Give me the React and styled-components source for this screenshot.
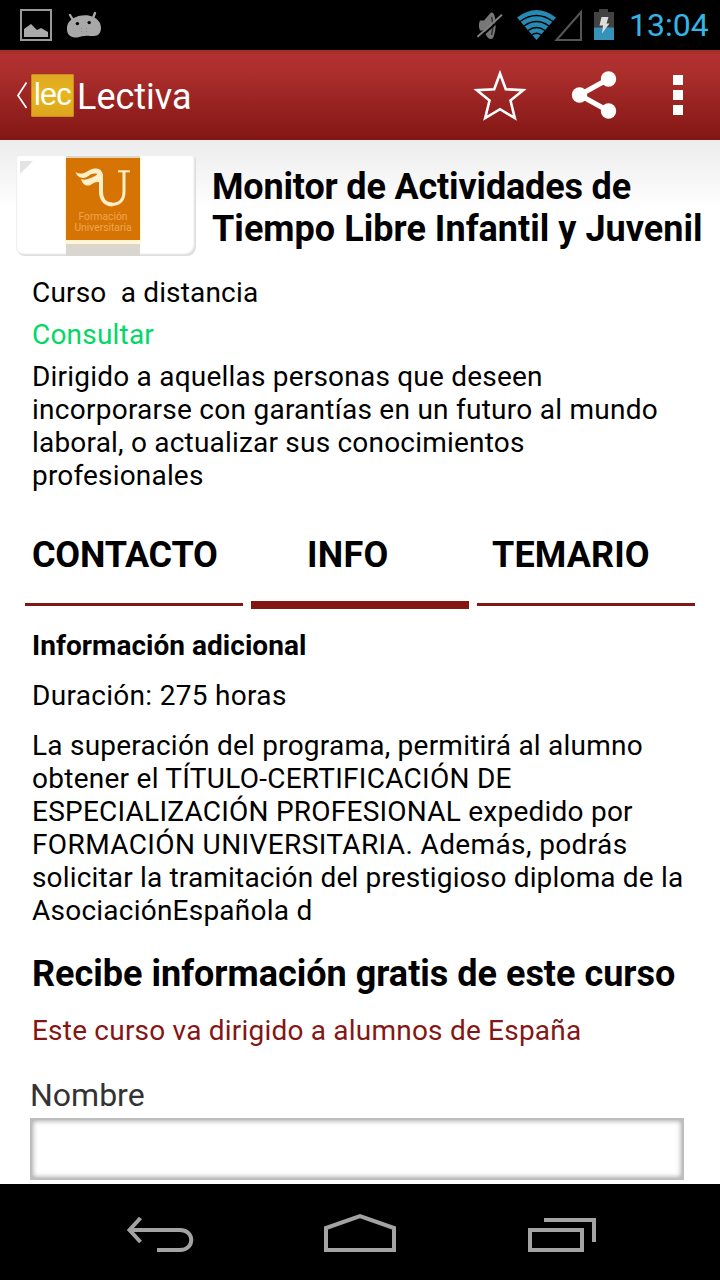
import React from 'react'
import styled, { createGlobalStyle } from 'styled-components'

const GlobalStyle = createGlobalStyle`
  body {
    margin: 0;
    background: #fff;
  }
`

const Screen = styled.div`
  display: flex;
  flex-direction: column;
  width: 720px;
  height: 1280px;
  overflow: hidden;
  background: #fff;
  color: #000;
  font-family: Roboto, 'Noto Sans', sans-serif;
  font-size: 28px;
  line-height: 33px;
`

const StatusBar = styled.header`
  display: flex;
  flex: none;
  justify-content: space-between;
  height: 50px;
  background: #000;
`

const StatusIcons = styled.svg`
  display: block;
  height: 50px;
`

const StatusRight = styled.div`
  display: flex;
`

const Clock = styled.span`
  width: 91px;
  padding-left: 1px;
  font-size: 32px;
  line-height: 51px;
  color: #33b5e5;
`

const ActionBar = styled.nav`
  display: flex;
  flex: none;
  align-items: center;
  height: 90px;
  padding-left: 16px;
  background: linear-gradient(#9f2b29 0, #b03130 5px, #ae302e 18px, #821614 100%);
  color: #fff;
`

const BackIcon = styled.svg`
  width: 15px;
  height: 90px;
`

const AppBadge = styled.div`
  box-sizing: border-box;
  width: 43px;
  height: 43px;
  margin-top: 1px;
  padding-left: 2px;
  border: 1px solid #cf8a1d;
  border-radius: 1px;
  background: linear-gradient(#dda823, #e8b51a 50%, #dca51f);
  font-family: 'Liberation Sans', Arial, sans-serif;
  font-size: 31px;
  line-height: 40px;
  letter-spacing: -1px;
`

const AppName = styled.span`
  flex: 1;
  padding: 3px 0 0 3px;
  font-size: 36px;
  line-height: 42px;
`

const Actions = styled.svg`
  width: 260px;
  height: 90px;
`

const Content = styled.main`
  flex: 1;
  min-height: 0;
  background: linear-gradient(#ececec, #fff 70px);
`

const CourseHeader = styled.div`
  display: flex;
  padding: 16px 16px 20px;
`

const Logo = styled.div`
  display: flex;
  position: relative;
  box-sizing: border-box;
  justify-content: center;
  width: 180px;
  height: 100px;
  padding-right: 6px;
  border-radius: 3px 3px 9px 9px;
  background: #fff;
  box-shadow: inset -2px -2px 2px #ddd, inset 1px 0 1px #eee;

  &::before {
    content: '';
    position: absolute;
    top: 5px;
    left: 4px;
    border-top: 13px solid #e4e4e6;
    border-right: 13px solid transparent;
  }
`

const LogoMark = styled.div`
  display: flex;
  box-sizing: border-box;
  flex-direction: column;
  width: 74px;
  height: 100px;
  background: #d9d5d0;
`

const LogoTile = styled.div`
  height: 82px;
  margin-top: 2px;
  border-bottom: 4px solid #fff5d8;
  background: #d57403;
  box-shadow: 0 0 2px #ffd98a;
  color: #f0a550;

  svg {
    display: block;
  }
`

const LogoText = styled.div`
  height: 11px;
  font-size: 10.3px;
  line-height: 13px;
  text-align: center;
`

const Title = styled.h1`
  margin: 10px 0 0 16px;
  font-size: 36px;
  font-weight: 700;
  line-height: 42px;
`

const Line = styled.span`
  display: block;
  white-space: pre;
  letter-spacing: ${props => props.$track || 0}px;
`

const Text = styled.p`
  margin: 0 32px ${props => props.$gap || 0}px;
  color: ${props => props.$color || 'inherit'};
  font-weight: ${props => (props.$bold ? 700 : 400)};
`

const Tabs = styled.div`
  display: grid;
  grid-template-columns: repeat(3, 218px);
  column-gap: 8px;
  height: 75px;
  margin: 42px 25px 20px;
`

const Tab = styled.div`
  display: flex;
  flex-direction: column;
  font-size: 36px;
  font-weight: 700;
  line-height: 42px;

  span {
    padding-left: ${props => props.$indent}px;
  }

  &::after {
    content: '';
    height: ${props => (props.$active ? 8 : 3)}px;
    margin-top: ${props => (props.$active ? 25 : 27)}px;
    background: #841614;
  }
`

const FormTitle = styled.h2`
  margin: 0 32px 19px;
  font-size: 36px;
  font-weight: 700;
  line-height: 42px;
`

const Field = styled.label`
  display: block;
  margin: 0 36px 0 30px;
  color: #333;
  font-size: 32px;
  line-height: 38px;
`

const Input = styled.input`
  display: block;
  box-sizing: border-box;
  width: 100%;
  height: 62px;
  margin-top: 4px;
  border: 2px solid #bdbdbd;
  border-radius: 0;
  outline: 0;
  background: #fff;
  box-shadow: inset 0 0 5px 1px #aaa;
`

const NavBar = styled.footer`
  flex: none;
  height: 96px;
  background: #000;

  svg {
    display: block;
  }
`

// each line is [text, letter-spacing]
const titleLines = [
  ['Monitor de Actividades de', -0.17],
  ['Tiempo Libre Infantil y Juvenil', 0.03]
]

const summary = [
  ['Dirigido a aquellas personas que deseen', 0.21],
  ['incorporarse con garantías en un futuro al mundo', 0.26],
  ['laboral, o actualizar sus conocimientos', 0.2],
  ['profesionales', 0.18]
]

const details = [
  ['La superación del programa, permitirá al alumno', 0.23],
  ['obtener el TÍTULO-CERTIFICACIÓN DE', 0.26],
  ['ESPECIALIZACIÓN PROFESIONAL expedido por', 0.23],
  ['FORMACIÓN UNIVERSITARIA. Además, podrás', 0.38],
  ['solicitar la tramitación del prestigioso diploma de la', 0.17],
  ['AsociaciónEspañola d', 0.23]
]

const printLines = lines =>
  lines.map(([text, track]) => (
    <Line key={text} $track={track}>
      {text}
    </Line>
  ))

const Notifications = () => (
  <StatusIcons width="120" viewBox="0 0 120 50">
    <path d="M21 10h30v30H21z" fill="none" stroke="#999" strokeWidth="2" />
    <path d="M24 37v-8l7-5 6 6 4-2 7 4v5z" fill="#aaa" />
    <path
      d="M70 15l3 5M95 13l-2 5"
      stroke="#a8a8a8"
      strokeWidth="2.4"
      strokeLinecap="round"
    />
    <path
      d="M73 18.500c5-3.500 15-4.500 20-1.500 5 2 8 6 8 11s-3 8-7 8c-5 0-8-1-12 .3-4 1.200-8 2-11 .2-4-2-4.500-7-3.700-11 .7-3 3-5.500 5.700-7z"
      fill="#a8a8a8"
    />
    <circle cx="77.400" cy="23.600" r="1.700" />
    <circle cx="89.200" cy="22.600" r="1.700" />
    <path d="M81.500 28v1M86.500 28v1M81.500 31v1M86.500 31v1" stroke="#8c8c8c" />
  </StatusIcons>
)

const SystemIcons = () => (
  <StatusIcons width="156" viewBox="472 0 156 50">
    <path
      d="M480 20.500h4l6-7c2-2 4-1 5 4 1 6 1 12-1 18-1 4-3 4-5 3-3-2-4-6-5-8h-4c-1.500-3-1.500-7 0-10z"
      fill="#777"
    />
    <path d="M491.500 17c1.500 5 1.500 13 0 18" fill="none" stroke="#333" strokeWidth="1.500" />
    <path d="M479 38.500l24.500-22" stroke="#000" strokeWidth="2" />
    <path d="M477.500 36.800L502 14.800" stroke="#808080" strokeWidth="2" />
    <path d="M517 17.500q19.500-15 39 0L536.500 40z" fill="#278ab4" />
    <path
      d="M520 21.500q16.500-12 33 0M524 26q12.500-9 25 0M528 30.500q8.500-6 17 0M531.500 35q5-3.500 10 0"
      fill="none"
      stroke="#000"
      strokeWidth="1.500"
    />
    <path d="M556.500 40L581 12v28z" fill="none" stroke="#555" strokeWidth="2" />
    <path d="M594 12h5V9h9v3h6v16h-20z" fill="#424242" />
    <path d="M594 27.500h20V40h-20z" fill="#3593b9" />
    <path d="M601.500 17h7l-2 6.500h3l-7.500 10 1-8h-3.500z" fill="#ddd" />
  </StatusIcons>
)

const App = () => (
  <Screen>
    <GlobalStyle />
    <StatusBar>
      <Notifications />
      <StatusRight>
        <SystemIcons />
        <Clock>13:04</Clock>
      </StatusRight>
    </StatusBar>
    <ActionBar>
      <BackIcon viewBox="16 50 15 90">
        <path d="M26.500 82.500L18 95.500l8.500 12.500" fill="none" stroke="#fff" strokeWidth="1.700" />
      </BackIcon>
      <AppBadge>lec</AppBadge>
      <AppName>Lectiva</AppName>
      <Actions viewBox="460 50 260 90">
        <path
          d="M500 73.500l5.800 15.700 17.400 1-12.700 10.300 4.300 17.500L500 109.200 485.200 118l4.300-17.500-12.700-10.300 17.400-1z"
          fill="none"
          stroke="#fff"
          strokeWidth="2.600"
        />
        <path d="M608.500 79L579.500 95l29 16" fill="none" stroke="#fff" strokeWidth="5" />
        <circle cx="608.500" cy="79" r="7.700" fill="#fff" />
        <circle cx="579.500" cy="95" r="7.700" fill="#fff" />
        <circle cx="608.500" cy="111" r="7.700" fill="#fff" />
        <path d="M673 75h10v10h-10zM673 90h10v10h-10zM673 105h10v10h-10z" fill="#fff" />
      </Actions>
    </ActionBar>
    <Content>
      <CourseHeader>
        <Logo>
          <LogoMark>
            <LogoTile>
              <svg width="74" height="52" viewBox="66 158 74 52" fill="none" stroke="#fff0c9">
                <path
                  d="M75.500 172c2.500 7 9 7 13 4 3-2.500 6-3 9-2-3 3-5 3-7 4-4 2-7 2-9.500 1 2 7 7 8 11 5 3-2 5-2 8-2l3-2v-3c0-6-3-9-8-8.500-6 .5-9 5-13 5-3 0-5-.5-6.500-1.500z"
                  fill="#fff0c9"
                  stroke="none"
                />
                <path d="M101 174v17c0 8 4 13.500 11.500 13.500" strokeWidth="4" />
                <path d="M111 204.500c9 0 13-5 13-13V171" strokeWidth="3" />
                <path d="M118 171.300h12" strokeWidth="2" />
              </svg>
              <LogoText>Formación</LogoText>
              <LogoText>Universitaria</LogoText>
            </LogoTile>
          </LogoMark>
        </Logo>
        <Title>{printLines(titleLines)}</Title>
      </CourseHeader>
      <Text $gap={9}>
        <Line $track={0.17}>{'Curso  a distancia'}</Line>
      </Text>
      <Text $gap={9} $color="#00d966">
        <Line $track={0.2}>Consultar</Line>
      </Text>
      <Text>{printLines(summary)}</Text>
      <Tabs>
        <Tab $indent={7}>
          <Line $track={-0.2}>CONTACTO</Line>
        </Tab>
        <Tab $indent={56} $active>
          <Line $track={0.25}>INFO</Line>
        </Tab>
        <Tab $indent={15}>
          <Line $track={0.1}>TEMARIO</Line>
        </Tab>
      </Tabs>
      <Text $gap={17} $bold>
        <Line $track={0.03}>Información adicional</Line>
      </Text>
      <Text $gap={17}>
        <Line $track={0.31}>Duración: 275 horas</Line>
      </Text>
      <Text $gap={26}>{printLines(details)}</Text>
      <FormTitle>
        <Line>Recibe información gratis de este curso</Line>
      </FormTitle>
      <Text $gap={29} $color="#841614">
        <Line $track={0.21}>Este curso va dirigido a alumnos de España</Line>
      </Text>
      <Field>
        Nombre
        <Input type="text" />
      </Field>
    </Content>
    <NavBar>
      <svg width="720" height="96" viewBox="0 1184 720 96" fill="none" stroke="#a3a3a3" strokeWidth="4">
        <path d="M140.500 1218l-11 12 11 12M130 1230h50c15 0 15 20 0 20h-23" />
        <path d="M326 1250v-22l34-12 34 12v22z" />
        <path d="M530 1230h52v20h-52zM544 1220h50v22" />
      </svg>
    </NavBar>
  </Screen>
)

export default App
